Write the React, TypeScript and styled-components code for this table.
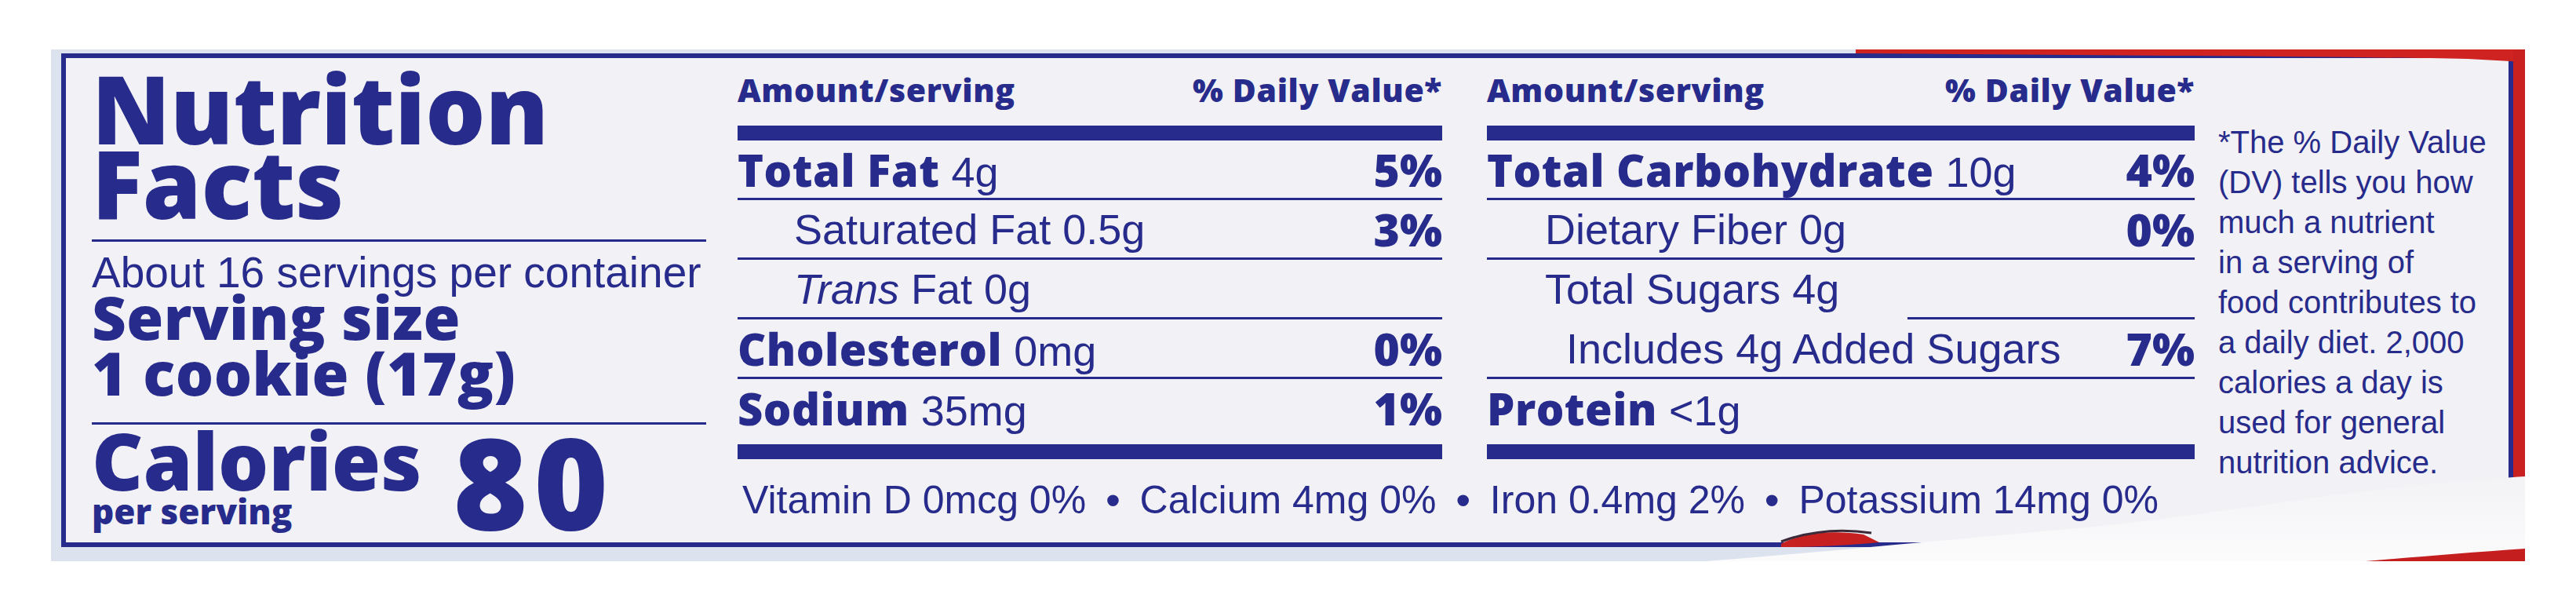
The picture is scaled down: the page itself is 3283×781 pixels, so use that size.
import React from "react";
import styled, { createGlobalStyle } from "styled-components";

const NAVY = "#272b8b";
const HEAVY = `"Open Sans", "Liberation Sans", sans-serif`;
const REG = `"Liberation Sans", Arial, sans-serif`;

const GlobalStyle = createGlobalStyle`
  html, body {
    margin: 0;
    padding: 0;
    background: #ffffff;
  }
  body {
    width: 3283px;
    height: 781px;
    overflow: hidden;
  }
`;

interface NutrientRow {
  name: string;
  amount: string;
  pct?: string;
  bold?: boolean;
  italic?: string;
  indent?: number;
  lineStart?: number;
  last?: boolean;
}

const fatRows: NutrientRow[] = [
  { name: "Total Fat", amount: "4g", pct: "5%", bold: true },
  { name: "Saturated Fat", amount: "0.5g", pct: "3%", indent: 72 },
  { name: "Fat", italic: "Trans", amount: "0g", indent: 72 },
  { name: "Cholesterol", amount: "0mg", pct: "0%", bold: true },
  { name: "Sodium", amount: "35mg", pct: "1%", bold: true, last: true },
];

const carbRows: NutrientRow[] = [
  { name: "Total Carbohydrate", amount: "10g", pct: "4%", bold: true },
  { name: "Dietary Fiber", amount: "0g", pct: "0%", indent: 74 },
  { name: "Total Sugars", amount: "4g", indent: 74, lineStart: 536 },
  { name: "Includes 4g Added Sugars", amount: "", pct: "7%", indent: 101 },
  { name: "Protein", amount: "<1g", bold: true, last: true },
];

const vitamins = [
  "Vitamin D 0mcg 0%",
  "Calcium 4mg 0%",
  "Iron 0.4mg 2%",
  "Potassium 14mg 0%",
];

const footnote = [
  "*The % Daily Value",
  "(DV) tells you how",
  "much a nutrient",
  "in a serving of",
  "food contributes to",
  "a daily diet. 2,000",
  "calories a day is",
  "used for general",
  "nutrition advice.",
];

const Table: React.FC<{ area: string; rows: NutrientRow[] }> = ({ area, rows }) => (
  <Column $area={area}>
    <Header>
      <span>Amount/serving</span>
      <span>% Daily Value*</span>
    </Header>
    <ThickBar $top={22} />
    {rows.map((r) => (
      <Row key={r.name} $indent={r.indent || 0} $lineStart={r.lineStart || 0} $last={!!r.last}>
        <RowLabel>
          {r.italic && <em>{r.italic} </em>}
          {r.bold ? <Strong>{r.name}</Strong> : r.name}
          {r.amount && ` ${r.amount}`}
        </RowLabel>
        {r.pct && <Pct>{r.pct}</Pct>}
      </Row>
    ))}
    <ThickBar $top={7} />
  </Column>
);

const App: React.FC = () => {
  return (
    <Page>
      <GlobalStyle />
      <Sheet>
        <Label>
          <LeftPanel>
            <Title>
              Nutrition
              <br />
              Facts
            </Title>
            <Divider $top={25} />
            <Servings>About 16 servings per container</Servings>
            <ServingSize>
              Serving size
              <br />1 cookie (17g)
            </ServingSize>
            <Divider $top={28} />
            <CaloriesRow>
              <CaloriesStack>
                <CaloriesWord>Calories</CaloriesWord>
                <PerServing>per serving</PerServing>
              </CaloriesStack>
              <CaloriesValue>80</CaloriesValue>
            </CaloriesRow>
          </LeftPanel>

          <Table area="mid" rows={fatRows} />
          <Table area="right" rows={carbRows} />

          <Vitamins>
            {vitamins.map((v, i) => (
              <React.Fragment key={v}>
                {i > 0 && <Bullet>•</Bullet>}
                <span>{v}</span>
              </React.Fragment>
            ))}
          </Vitamins>

          <Footnote>
            {footnote.map((line) => (
              <div key={line}>{line}</div>
            ))}
          </Footnote>
        </Label>

        <Overlay viewBox="0 0 3153 652" preserveAspectRatio="none">
          <defs>
            <linearGradient id="fold" x1="0" y1="0" x2="0" y2="1">
              <stop offset="0" stopColor="#f3f3f6" />
              <stop offset="1" stopColor="#fbfbfc" />
            </linearGradient>
          </defs>
          <path d="M2300 0 H3153 V16 L3080 12 C2900 9 2600 7 2300 5 Z" fill="#cf2322" />
          <rect x="3138" y="0" width="15" height="652" fill="#c92020" />
          <path d="M2940 652 C3010 646 3080 640 3153 634 V652 Z" fill="#c41e1e" />
          <path d="M2205 630 C2230 616 2270 612 2310 618 L2330 628 C2290 632 2250 634 2205 634 Z" fill="#c62020" />
          <path d="M2205 627 C2240 614 2280 610 2320 616" stroke="#3a2a3a" strokeWidth="3" fill="none" />
          <path
            d="M2110 652 C2250 641 2400 626 2550 613 C2680 602 2800 583 2915 567 C3000 556 3090 548 3153 544 V636 C3080 641 3010 647 2950 652 Z"
            fill="url(#fold)"
          />
        </Overlay>
      </Sheet>
    </Page>
  );
};

const Page = styled.div`
  width: 3283px;
  height: 781px;
  box-sizing: border-box;
  padding: 63px 65px 66px;
  background: #ffffff;
`;

const Sheet = styled.div`
  position: relative;
  height: 652px;
  box-sizing: border-box;
  padding: 5px 15px 18px 13px;
  background: #dde3ee;
`;

const Overlay = styled.svg`
  position: absolute;
  inset: 0;
  width: 100%;
  height: 100%;
  pointer-events: none;
`;

const Label = styled.div`
  height: 100%;
  box-sizing: border-box;
  border: 6px solid ${NAVY};
  background: #f2f1f5;
  color: ${NAVY};
  padding-left: 33px;
  display: grid;
  grid-template-columns: 783px 40px 898px 57px 902px 30px 1fr;
  grid-template-rows: auto 1fr;
  grid-template-areas:
    "left . mid . right . foot"
    "left . vit vit vit . foot";
`;

const LeftPanel = styled.div`
  grid-area: left;
  padding-top: 16px;
  display: flex;
  flex-direction: column;
`;

const Title = styled.h1`
  margin: 0;
  font-family: ${HEAVY};
  font-weight: 800;
  font-size: 120px;
  line-height: 95px;
`;

const Divider = styled.div<{ $top: number }>`
  height: 3px;
  margin-top: ${({ $top }) => $top}px;
  background: ${NAVY};
`;

const Servings = styled.div`
  margin-top: 18px;
  font-family: ${REG};
  font-size: 55px;
  line-height: 42px;
  white-space: nowrap;
`;

const ServingSize = styled.div`
  margin-top: 0;
  font-family: ${HEAVY};
  font-weight: 800;
  font-size: 76px;
  line-height: 71px;
  letter-spacing: 0.5px;
  white-space: nowrap;
`;

const CaloriesRow = styled.div`
  margin-top: 3px;
  display: flex;
  align-items: flex-start;
  gap: 40px;
`;

const CaloriesStack = styled.div`
  display: flex;
  flex-direction: column;
`;

const CaloriesWord = styled.div`
  font-family: ${HEAVY};
  font-weight: 800;
  font-size: 101px;
  line-height: 85px;
`;

const PerServing = styled.div`
  font-family: ${HEAVY};
  font-weight: 800;
  font-size: 44px;
  line-height: 44px;
`;

const CaloriesValue = styled.div`
  margin-top: 3px;
  font-family: ${HEAVY};
  font-weight: 800;
  font-size: 162px;
  line-height: 130px;
  letter-spacing: 8px;
`;

const Column = styled.div<{ $area: string }>`
  grid-area: ${({ $area }) => $area};
  padding-top: 16px;
  display: flex;
  flex-direction: column;
`;

const Header = styled.div`
  display: flex;
  justify-content: space-between;
  font-family: ${HEAVY};
  font-weight: 800;
  font-size: 41px;
  line-height: 48px;
  letter-spacing: 0.6px;
  white-space: nowrap;
`;

const ThickBar = styled.div<{ $top: number }>`
  height: 19px;
  margin-top: ${({ $top }) => $top}px;
  background: ${NAVY};
`;

const Row = styled.div<{ $indent: number; $lineStart: number; $last: boolean }>`
  height: 76px;
  box-sizing: border-box;
  padding: 0 0 3px ${({ $indent }) => $indent}px;
  display: flex;
  align-items: center;
  justify-content: space-between;
  white-space: nowrap;
  background: ${({ $last, $lineStart }) =>
    $last
      ? "none"
      : `linear-gradient(${NAVY}, ${NAVY}) no-repeat right bottom / calc(100% - ${$lineStart}px) 3px`};
`;

const RowLabel = styled.span`
  font-family: ${REG};
  font-size: 54px;
  em {
    font-style: italic;
  }
`;

const Strong = styled.span`
  font-family: ${HEAVY};
  font-weight: 800;
  font-size: 56px;
  letter-spacing: 0.5px;
`;

const Pct = styled.span`
  font-family: ${HEAVY};
  font-weight: 800;
  font-size: 57px;
`;

const Vitamins = styled.div`
  grid-area: vit;
  align-self: start;
  margin-top: 22px;
  padding: 0 46px 0 6px;
  display: flex;
  justify-content: space-between;
  font-family: ${REG};
  font-size: 50px;
  line-height: 60px;
  white-space: nowrap;
`;

const Bullet = styled.span`
  font-size: 54px;
`;

const Footnote = styled.div`
  grid-area: foot;
  padding-top: 82px;
  font-family: ${REG};
  font-size: 40px;
  line-height: 51px;
  white-space: nowrap;
`;

export default App;
